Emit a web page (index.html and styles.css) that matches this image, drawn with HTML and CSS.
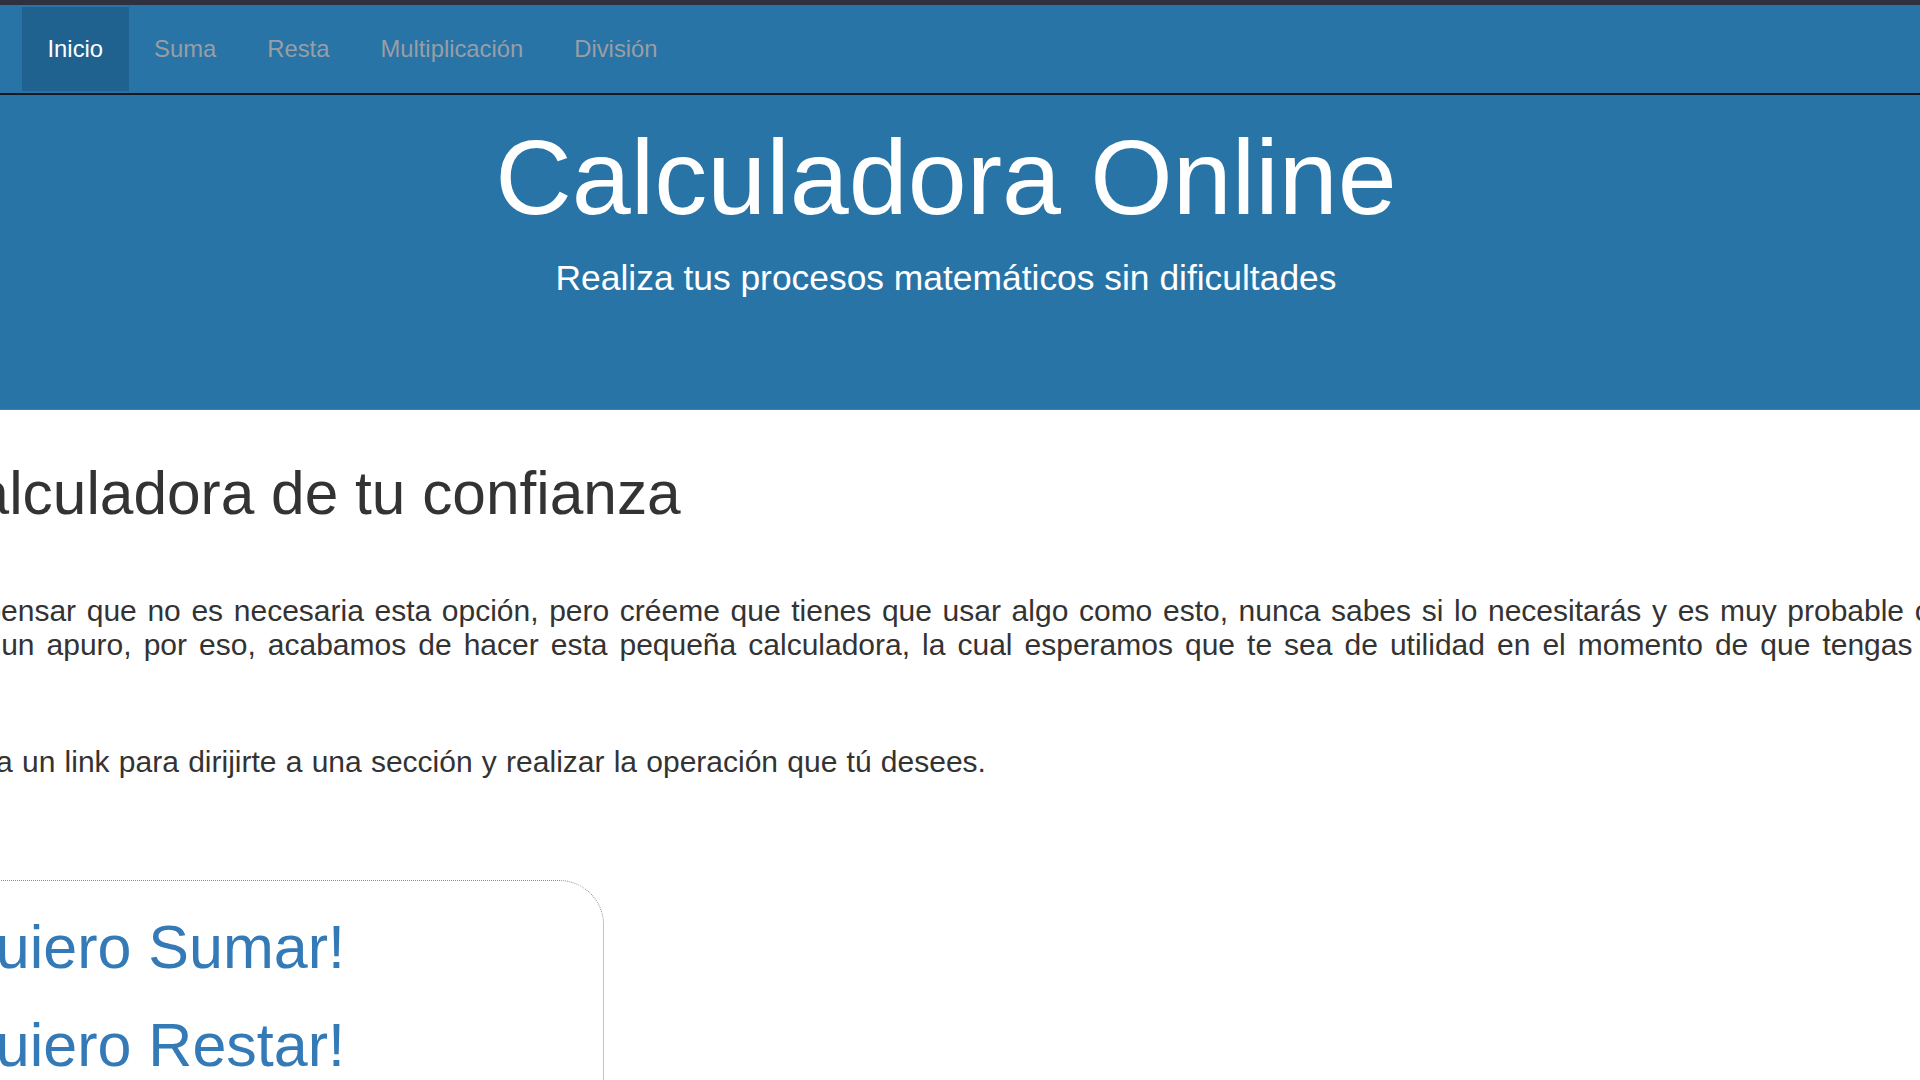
FILE: index.html
```html
<!DOCTYPE html>
<html lang="es">
<head>
<meta charset="utf-8">
<title>Calculadora Online</title>
<link rel="stylesheet" href="styles.css">
</head>
<body>
<div class="topbar"></div>
<nav class="navbar">
  <ul class="nav">
    <li class="nav-item active"><a href="#">Inicio</a></li>
    <li class="nav-item"><a href="#">Suma</a></li>
    <li class="nav-item"><a href="#">Resta</a></li>
    <li class="nav-item"><a href="#">Multiplicación</a></li>
    <li class="nav-item"><a href="#">División</a></li>
  </ul>
</nav>
<header class="hero">
  <div class="hero-inner">
    <h1 class="hero-title">Calculadora Online</h1>
    <p class="hero-sub">Realiza tus procesos matemáticos sin dificultades</p>
  </div>
</header>
<main class="main">
  <h2 class="section-title">Calculadora de tu confianza</h2>
  <p class="intro">
    <span class="line line-1">Puedes pensar que no es necesaria esta opción, pero créeme que tienes que usar algo como esto, nunca sabes si lo necesitarás y es muy probable cuando menos lo esperes</span>
    <span class="line line-2">estés en un apuro, por eso, acabamos de hacer esta pequeña calculadora, la cual esperamos que te sea de utilidad en el momento de que tengas alguna necesidad.</span>
  </p>
  <p class="intro intro-last">Selecciona un link para dirijirte a una sección y realizar la operación que tú desees.</p>
  <div class="links-box">
    <a class="big-link" href="#">¡Quiero Sumar!</a>
    <a class="big-link" href="#">¡Quiero Restar!</a>
    <a class="big-link" href="#">¡Quiero Multiplicar!</a>
    <a class="big-link" href="#">¡Quiero Dividir!</a>
  </div>
</main>
</body>
</html>
```
FILE: styles.css
```css
html, body {
  margin: 0;
  padding: 0;
  overflow: hidden;
  background: #ffffff;
}

body {
  font-family: "Liberation Sans", Arial, sans-serif;
  color: #333333;
}

.topbar {
  height: 5px;
  background: #2f3140;
}

.navbar {
  background: #2874a6;
  padding: 2px 0;
  border-bottom: 2px solid #141820;
}

.nav {
  list-style: none;
  margin: 0 0 0 22px;
  padding: 0;
  display: flex;
}

.nav-item a {
  display: block;
  padding: 0 25.5px;
  height: 84px;
  line-height: 84px;
  font-size: 23.8px;
  color: #9a9ea4;
  text-decoration: none;
}

.nav-item.active a {
  background: #1f6290;
  color: #ffffff;
}

.hero {
  background: #2874a6;
  height: 314px;
  border-bottom: 1px solid #3a82b4;
  color: #ffffff;
}

.hero-inner {
  padding: 24px 28px 0 0;
  text-align: center;
}

.hero-title {
  margin: 0;
  font-size: 106px;
  font-weight: normal;
  line-height: 1.1;
}

.hero-sub {
  margin: 21px 0 0;
  font-size: 35.4px;
  line-height: 1.2;
}

.main {
  margin-left: -128px;
  width: 2400px;
}

.section-title {
  margin: 50px 0 0;
  padding-left: 60px;
  font-size: 60.4px;
  font-weight: normal;
  line-height: 1.1;
  color: #333333;
}

.intro {
  margin: 68px 0 0;
  font-size: 30px;
  line-height: 34px;
  color: #333333;
}

.line {
  display: block;
  white-space: nowrap;
}

.line-1 {
  word-spacing: 2.3px;
}

.line-2 {
  word-spacing: 3.7px;
}

.intro-last {
  margin-top: 83px;
  white-space: nowrap;
  text-indent: -6px;
  word-spacing: 0.9px;
}

.links-box {
  margin-top: 101px;
  width: 675px;
  padding: 17px 0 40px 55px;
  border: 1px dotted #8a8a8a;
  border-radius: 45px;
}

.big-link {
  display: block;
  font-size: 61px;
  line-height: 98px;
  color: #337ab7;
  text-decoration: none;
  white-space: nowrap;
}
```
